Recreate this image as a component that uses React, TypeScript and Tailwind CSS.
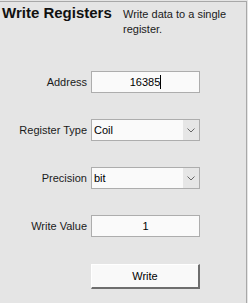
import React from 'react'

const font = { fontFamily: '"Liberation Sans", Arial, sans-serif' }

function Chevron() {
  return (
    <svg width="8" height="5" viewBox="0 0 8 5" className="block">
      <polyline points="0.5,0.5 4,4 7.5,0.5" fill="none" stroke="#666" strokeWidth="1" />
    </svg>
  )
}

function Row({ label, children }: { label: string; children: React.ReactNode }) {
  return (
    <div className="flex items-center h-[22px]">
      <div className="w-[88px] pr-px text-right text-[11px] text-[#1a1a1a]">{label}</div>
      <div className="ml-[3px] w-[109px] h-full">{children}</div>
    </div>
  )
}

function TextBox({ value, caret }: { value: string; caret?: boolean }) {
  return (
    <div className="h-full border border-[#adadad] bg-[#fafafa] flex items-center justify-center text-[11px] text-black">
      <span>{value}</span>
      {caret && <span className="w-px h-[14px] bg-black" />}
    </div>
  )
}

function Select({ value }: { value: string }) {
  return (
    <div className="h-full border border-[#adadad] bg-[#fafafa] flex items-stretch text-[11px] text-black">
      <div className="flex-1 flex items-center pl-[2px]">{value}</div>
      <div className="w-[16px] bg-[#e6e6e6] flex items-center justify-center">
        <Chevron />
      </div>
    </div>
  )
}

export default function App() {
  return (
    <div className="w-[248px] h-[303px] bg-[#e5e5e5] overflow-hidden" style={font}>
      <div className="mt-px w-[247px] h-[302px] border-t border-r border-[#a8a8a8]">
        {/* Header */}
        <div className="flex">
          <h1 className="pl-[2px] pt-[2px] w-[123px] text-[15px] leading-[18px] font-bold text-[#111]">
            Write Registers
          </h1>
          <p className="pt-[5px] w-[112px] text-[11px] leading-[15px] text-[#1a1a1a]">
            Write data to a single register.
          </p>
        </div>

        {/* Form */}
        <div className="mt-[34px] flex flex-col gap-[26px]">
          <Row label="Address">
            <TextBox value="16385" caret />
          </Row>
          <Row label="Register Type">
            <Select value="Coil" />
          </Row>
          <Row label="Precision">
            <Select value="bit" />
          </Row>
          <Row label="Write Value">
            <TextBox value="1" />
          </Row>
        </div>

        <div className="mt-[26px] ml-[91px] w-[109px]">
          <button className="w-full h-[25px] bg-[#f9f9f9] border-t border-l border-white border-b-2 border-r-2 border-b-[#6e6e6e] border-r-[#6e6e6e] text-[11px] text-black">
            Write
          </button>
        </div>
      </div>
    </div>
  )
}
